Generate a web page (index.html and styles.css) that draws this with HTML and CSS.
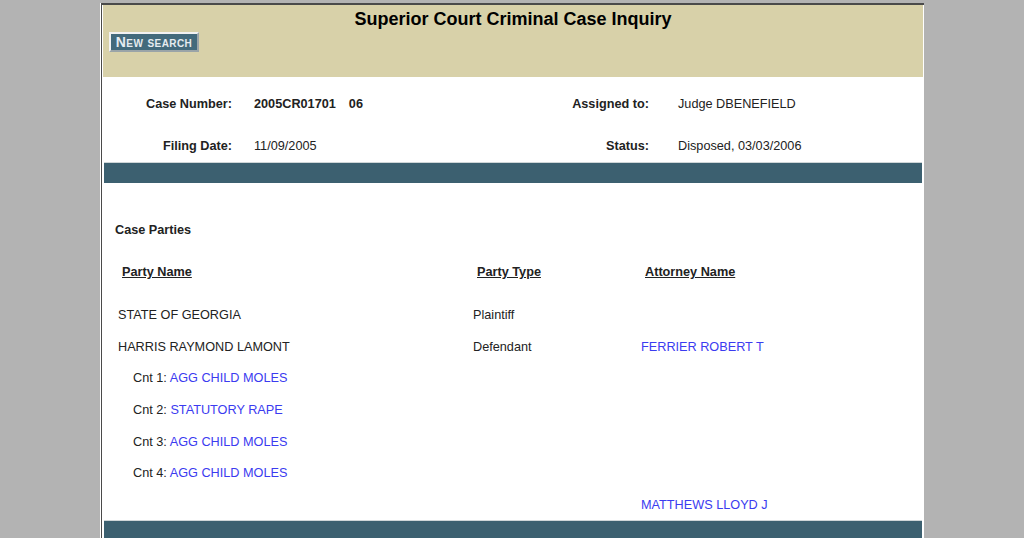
FILE: index.html
```html
<!DOCTYPE html>
<html>
<head>
<meta charset="utf-8">
<title>Superior Court Criminal Case Inquiry</title>
<link rel="stylesheet" href="styles.css">
</head>
<body>
<div class="page">
  <div class="frame">
    <div class="header">
      <h1 class="title">Superior Court Criminal Case Inquiry</h1>
      <button class="new-search" type="button">New search</button>
    </div>
    <div class="info">
      <div class="label">Case Number:</div>
      <div class="value strong">2005CR01701<span class="suffix">06</span></div>
      <div class="label">Assigned to:</div>
      <div class="value">Judge DBENEFIELD</div>
      <div class="label">Filing Date:</div>
      <div class="value">11/09/2005</div>
      <div class="label">Status:</div>
      <div class="value">Disposed, 03/03/2006</div>
    </div>
    <div class="bar"></div>
    <div class="parties">
      <div class="section-title">Case Parties</div>
      <div class="grid heads">
        <div class="head">Party Name</div>
        <div class="head">Party Type</div>
        <div class="head">Attorney Name</div>
      </div>
      <div class="grid rows">
        <div>STATE OF GEORGIA</div><div>Plaintiff</div><div></div>
        <div>HARRIS RAYMOND LAMONT</div><div>Defendant</div><div><a class="link" href="#">FERRIER ROBERT T</a></div>
        <div class="cnt">Cnt 1: <a class="link" href="#">AGG CHILD MOLES</a></div><div></div><div></div>
        <div class="cnt">Cnt 2: <a class="link" href="#">STATUTORY RAPE</a></div><div></div><div></div>
        <div class="cnt">Cnt 3: <a class="link" href="#">AGG CHILD MOLES</a></div><div></div><div></div>
        <div class="cnt">Cnt 4: <a class="link" href="#">AGG CHILD MOLES</a></div><div></div><div></div>
        <div></div><div></div><div><a class="link" href="#">MATTHEWS LLOYD J</a></div>
      </div>
    </div>
    <div class="bar bottom"></div>
  </div>
</div>
</body>
</html>
```

FILE: styles.css
```css
html, body {
  margin: 0;
  padding: 0;
  height: 100%;
  overflow: hidden;
}
body {
  background: #b3b3b3;
  font-family: "Liberation Sans", Arial, sans-serif;
  font-size: 12.7px;
  color: #222;
}
.page {
  margin: 3px 0 0 100px;
  width: 823px;
  background: #fff;
  padding-left: 1px;
  height: calc(100% - 3px);
  overflow: hidden;
}
.frame {
  border-top: 2px solid #4a4a4a;
  border-left: 1px solid #4a4a4a;
  padding: 0 1px 0 1px;
  height: 100%;
}
.header {
  background: #d8d1a9;
  height: 72px;
  display: flex;
  flex-direction: column;
  align-items: flex-start;
}
.title {
  align-self: stretch;
  margin: 4px 0 0;
  text-align: center;
  font-size: 18px;
  line-height: 20px;
  font-weight: bold;
  color: #000;
}
.new-search {
  margin: 3px 0 0 6px;
  width: 90px;
  height: 20px;
  padding: 0;
  background: #436a7c;
  border: 2px solid;
  border-color: #f2f2f2 #9aa4a8 #9aa4a8 #f2f2f2;
  color: #e6ecf0;
  font-family: "Liberation Sans", Arial, sans-serif;
  font-weight: bold;
  font-size: 14px;
  font-variant: small-caps;
  letter-spacing: 0.4px;
  line-height: 16px;
}
.info {
  display: grid;
  grid-template-columns: 151px 226px 198px 1fr;
  row-gap: 28px;
  padding: 20px 0 10px;
  line-height: 14px;
}
.label {
  text-align: right;
  font-weight: bold;
  padding-right: 22px;
}
.label:nth-child(3), .label:nth-child(7) {
  padding-right: 29px;
}
.strong {
  font-weight: bold;
}
.suffix {
  margin-left: 13px;
}
.bar {
  height: 20px;
  margin: 0 1px;
  background: #3c6070;
  box-shadow: 0 -1px 0 #cfd6d8;
}
.bar.bottom {
  height: 40px;
}
.parties {
  padding: 40px 0 9px 0;
  line-height: 14px;
}
.section-title {
  font-weight: bold;
  padding-left: 12px;
}
.grid {
  display: grid;
  grid-template-columns: 355px 168px 1fr;
  padding-left: 15px;
}
.heads {
  margin-top: 28px;
}
.head {
  font-weight: bold;
  text-decoration: underline;
  padding-left: 4px;
}
.rows {
  margin-top: 29px;
  row-gap: 17.67px;
}
.cnt {
  padding-left: 15px;
}
.link {
  color: #3b3bf0;
  text-decoration: none;
}
```
